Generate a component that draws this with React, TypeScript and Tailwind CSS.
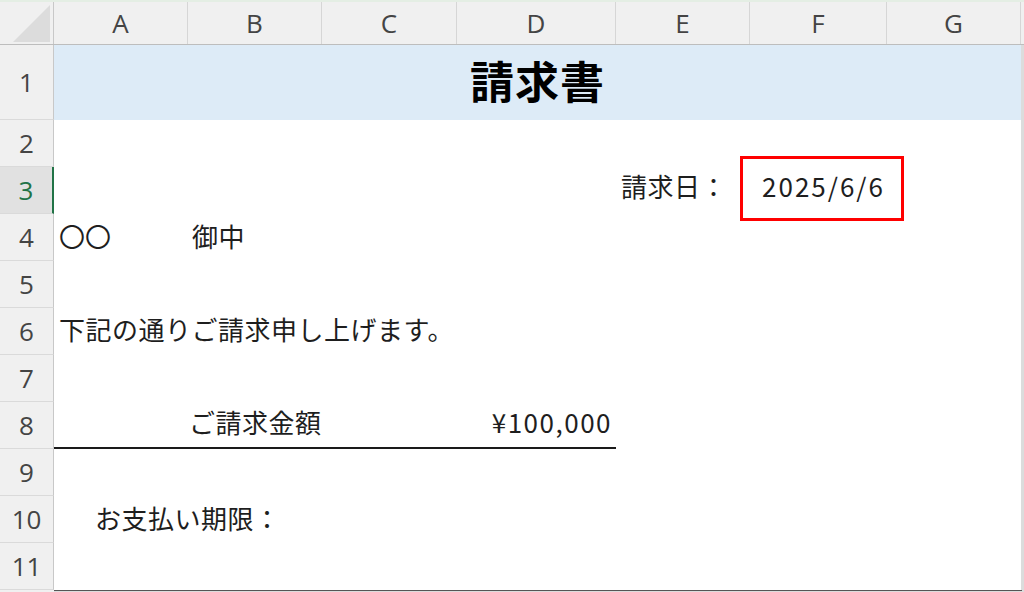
import React from "react";

const cols = ["A", "B", "C", "D", "E", "F", "G"];
const colW = ["w-[134px]", "w-[134px]", "w-[135px]", "w-[159px]", "w-[134px]", "w-[137px]", "w-[134px]"];

const jp = { fontFamily: '"Noto Sans CJK JP", "Noto Sans", sans-serif' };

function RowHead({ n, selected }: { n: number; selected?: boolean }) {
  return (
    <div
      className={
        "w-[54px] shrink-0 flex items-center justify-center border-b border-[#dadada] text-[26px] " +
        (selected
          ? "bg-[#e1e1e1] text-[#217346] border-r-2 border-r-[#217346]"
          : "bg-[#f0f0f0] text-[#444] border-r border-r-[#c8c8c8]")
      }
      style={{ fontFamily: '"Open Sans", sans-serif' }}
    >
      {n}
    </div>
  );
}

function Row({ n, h, selected, children }: { n: number; h: string; selected?: boolean; children?: React.ReactNode }) {
  return (
    <div className={"flex " + h}>
      <RowHead n={n} selected={selected} />
      <div className="grid grid-cols-[134px_134px_135px_159px_134px_137px_134px] grid-rows-[100%] w-[967px] border-r border-[#3a3a3a] text-[26px] leading-[32px] text-[#1e1e1e]" style={jp}>
        {children}
      </div>
    </div>
  );
}

export default function App() {
  return (
    <div className="relative w-[1024px] h-[592px] overflow-hidden bg-[#dcdcdc]">
      <div className="h-[2px] bg-[#e4eee4]" />

      {/* column headers */}
      <div className="flex h-[43px] bg-[#f0f0f0] border-b border-[#bdbdbd]">
        <div className="w-[54px] shrink-0 relative border-r border-[#c8c8c8]">
          <svg className="absolute right-[3px] bottom-[2px]" width="37" height="37" viewBox="0 0 37 37">
            <polygon points="37,0 37,37 0,37" fill="#dcdcdc" />
          </svg>
        </div>
        {cols.map((c, i) => (
          <div
            key={c}
            className={colW[i] + " shrink-0 flex items-center justify-center border-r border-[#d6d6d6] text-[26px] text-[#444]"}
            style={{ fontFamily: '"Open Sans", sans-serif' }}
          >
            {c}
          </div>
        ))}
        <div className="flex-1" />
      </div>

      <Row n={1} h="h-[75px]">
        <div className="col-span-7 bg-[#ddebf7] flex items-center justify-center pb-[5px] text-[44px] leading-[50px] font-bold text-black tracking-[1px]">
          請求書
        </div>
      </Row>
      <Row n={2} h="h-[47px]">
        <div className="col-span-7 bg-white" />
      </Row>
      <Row n={3} h="h-[47px]" selected>
        <div className="col-span-4 bg-white" />
        <div className="bg-white flex items-center pl-[5px] pb-[9px] whitespace-nowrap tracking-[0.5px]">請求日：</div>
        <div className="bg-white flex items-center justify-end pr-[2px] pb-[9px] whitespace-nowrap tracking-[2px]">2025/6/6</div>
        <div className="bg-white" />
      </Row>
      <Row n={4} h="h-[47px]">
        <div className="bg-white flex items-center pl-[5px] pb-[4px] whitespace-nowrap">〇〇</div>
        <div className="bg-white flex items-center pl-[4px] pb-[4px] whitespace-nowrap tracking-[0.5px]">御中</div>
        <div className="col-span-5 bg-white" />
      </Row>
      <Row n={5} h="h-[47px]">
        <div className="col-span-7 bg-white" />
      </Row>
      <Row n={6} h="h-[47px]">
        <div className="col-span-7 bg-white flex items-center pl-[5px] pb-[5px] whitespace-nowrap tracking-[0.5px]">
          下記の通りご請求申し上げます。
        </div>
      </Row>
      <Row n={7} h="h-[47px]">
        <div className="col-span-7 bg-white" />
      </Row>
      <Row n={8} h="h-[47px]">
        <div className="bg-white border-b-2 border-[#1a1a1a]" />
        <div className="col-span-2 bg-white border-b-2 border-[#1a1a1a] flex items-center pl-[1px] pb-[6px] whitespace-nowrap tracking-[0.5px]">
          ご請求金額
        </div>
        <div className="bg-white border-b-2 border-[#1a1a1a] flex items-center justify-end pr-[4px] pb-[6px] whitespace-nowrap tracking-[1.5px]">
          ¥100,000
        </div>
        <div className="col-span-3 bg-white" />
      </Row>
      <Row n={9} h="h-[47px]">
        <div className="col-span-7 bg-white" />
      </Row>
      <Row n={10} h="h-[47px]">
        <div className="col-span-7 bg-white flex items-center pl-[41px] pb-[4px] whitespace-nowrap tracking-[0.5px]">
          お支払い期限：
        </div>
      </Row>
      <Row n={11} h="h-[47px]">
        <div className="col-span-7 bg-white" />
      </Row>
      <div className="flex">
        <div className="w-[54px] h-[2px] bg-[#f0f0f0]" />
        <div className="w-[968px] h-[1px] bg-[#555]" />
      </div>

      {/* annotation */}
      <div className="absolute left-[740px] top-[156px] w-[164px] h-[65px] border-[3px] border-[#ff0000]" />
    </div>
  );
}
